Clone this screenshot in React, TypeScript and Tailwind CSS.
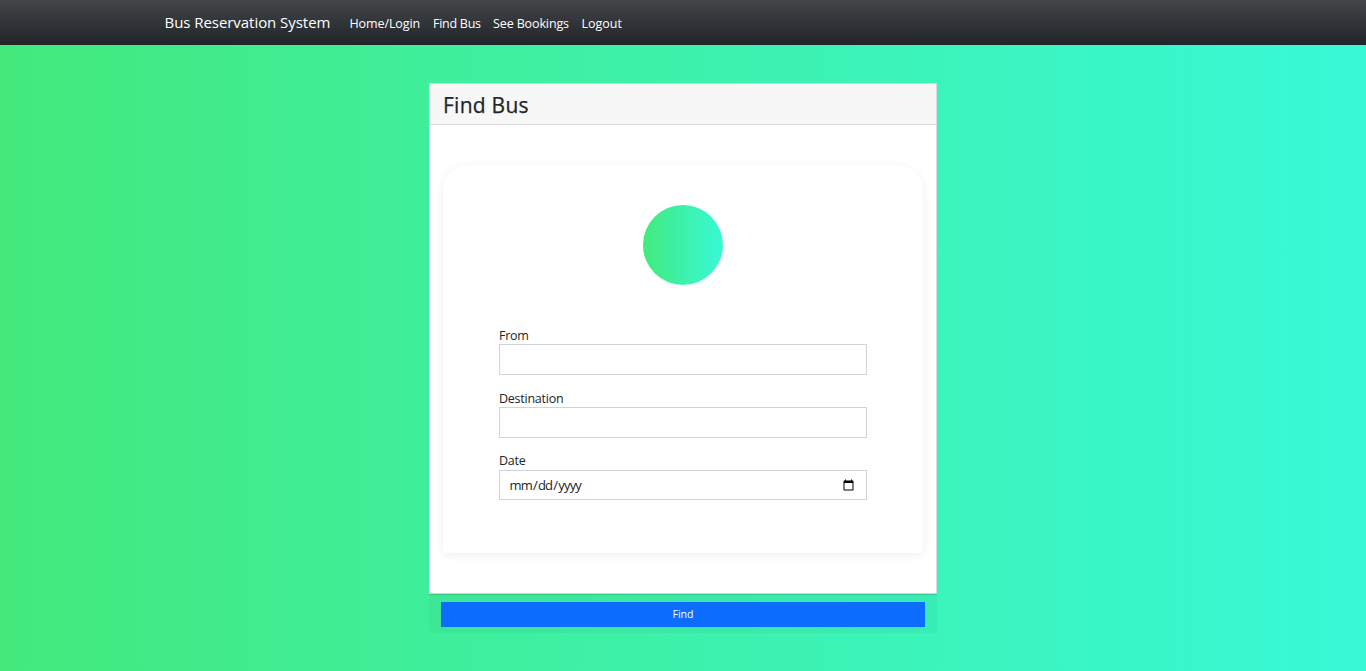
import React from "react";

const links = [
  { label: "Home/Login", cls: "w-[71.5px] tracking-[-0.1px]" },
  { label: "Find Bus", cls: "w-[48px] tracking-[-0.26px]" },
  { label: "See Bookings", cls: "w-[76.5px] tracking-[-0.12px]" },
  { label: "Logout", cls: "w-[41px] tracking-[0px]" },
];

function Navbar() {
  return (
    <nav className="flex h-[45px] items-center bg-linear-to-b from-[#424649] to-[#212529] pl-[164.5px] text-white">
      <a href="#" className="mr-5 w-[165px] -translate-y-px whitespace-nowrap text-[15px] leading-6 tracking-[-0.05px]">
        Bus Reservation System
      </a>
      <div className="flex gap-3 pt-[3px] text-[12.5px] leading-5">
        {links.map((l) => (
          <a key={l.label} href="#" className={`whitespace-nowrap ${l.cls}`}>
            {l.label}
          </a>
        ))}
      </div>
    </nav>
  );
}

const inputClass =
  "block w-full border border-[#ced4da] bg-white px-[9px] text-[13px] text-[#212529] outline-none";

export default function App() {
  return (
    <div className="min-h-[671px] bg-linear-to-r from-[#43e97b] to-[#38f9d7] font-['Open_Sans','Noto_Sans',sans-serif]">
      <Navbar />
      <main className="mx-auto w-[508px] pt-[38px] text-[#212529]">
        <section className="h-[511px] border border-[#d9d9d9] bg-white">
          <header className="h-[41px] border-b border-[#d8d8d8] bg-[#f7f7f7] pl-[13px]">
            <h5 className="text-[21px] font-medium leading-[42px] tracking-[0.25px] [-webkit-text-stroke:0.25px_#212529]">Find Bus</h5>
          </header>
          <div className="mx-[13px] mt-10 h-[388px] rounded-t-[25px] px-14 pt-10 shadow-[0_2px_10px_rgba(0,0,0,0.07)]">
            <div className="mx-auto size-20 rounded-full bg-linear-to-r from-[#43e97b] to-[#38f9d7]" />
            <form className="pt-[41px] text-[12.5px]">
              <label className="block h-[18px] pt-px leading-[18px] tracking-[-0.25px]">From</label>
              <input type="text" className={`${inputClass} h-[31px]`} />
              <label className="mt-[14px] block h-[18px] pt-px leading-[18px] tracking-[-0.25px]">Destination</label>
              <input type="text" className={`${inputClass} h-[31px]`} />
              <label className="mt-[14px] block h-[18px] leading-[18px] tracking-[-0.25px]">Date</label>
              <input type="date" className={`${inputClass} h-[30px] pt-px pl-[8.5px] tracking-[-0.8px]`} />
            </form>
          </div>
        </section>
        <footer className="h-[39px] rounded-b-[3px] border-t border-black/15 bg-black/3 px-3 pt-[7px]">
          <button className="block h-[25px] w-full bg-[#0d6efd] text-center text-[10.5px] leading-[25px] text-white">
            Find
          </button>
        </footer>
      </main>
    </div>
  );
}
